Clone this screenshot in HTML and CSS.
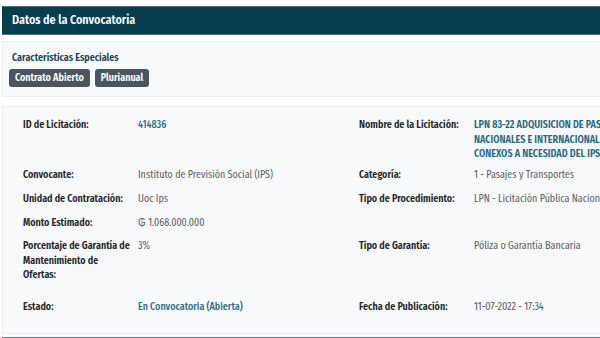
FILE: index.html
```html
<!DOCTYPE html>
<html lang="es">
<head>
<meta charset="utf-8">
<title>Datos de la Convocatoria</title>
<link rel="stylesheet" href="styles.css">
</head>
<body>
<div class="page">
  <div class="panel-header">Datos de la Convocatoria</div>

  <div class="card special">
    <div class="special-title">Características Especiales</div>
    <div class="badges">
      <span class="badge">Contrato Abierto</span>
      <span class="badge">Plurianual</span>
    </div>
  </div>

  <div class="card details">
    <div class="row row-first">
      <div class="label">ID de Licitación:</div>
      <div class="value link">414836</div>
      <div class="label">Nombre de la Licitación:</div>
      <div class="value title">LPN 83-22 ADQUISICION DE PASAJES AEREOS<br>NACIONALES E INTERNACIONALES Y SERVICIOS<br>CONEXOS A NECESIDAD DEL IPS</div>
    </div>
    <div class="row row-second">
      <div class="label">Convocante:</div>
      <div class="value">Instituto de Previsión Social (IPS)</div>
      <div class="label">Categoría:</div>
      <div class="value">1 - Pasajes y Transportes</div>
    </div>
    <div class="row">
      <div class="label">Unidad de Contratación:</div>
      <div class="value">Uoc Ips</div>
      <div class="label">Tipo de Procedimiento:</div>
      <div class="value">LPN - Licitación Pública Nacional</div>
    </div>
    <div class="row">
      <div class="label">Monto Estimado:</div>
      <div class="value">₲ 1.068.000.000</div>
      <div class="label"></div>
      <div class="value"></div>
    </div>
    <div class="row row-wide">
      <div class="label">Porcentaje de Garantía de<br>Mantenimiento de<br>Ofertas:</div>
      <div class="value">3%</div>
      <div class="label">Tipo de Garantía:</div>
      <div class="value">Póliza o Garantía Bancaria</div>
    </div>
    <div class="row">
      <div class="label">Estado:</div>
      <div class="value link">En Convocatoria (Abierta)</div>
      <div class="label">Fecha de Publicación:</div>
      <div class="value">11-07-2022 - 17:34</div>
    </div>
  </div>

  <div class="next-header"></div>
</div>
</body>
</html>
```
FILE: styles.css
```css
html, body {
  margin: 0;
  padding: 0;
  overflow: hidden;
  background: #ffffff;
}

body {
  font-family: "Fira Sans Condensed", "Fira Sans", "Liberation Sans", sans-serif;
  font-size: 10px;
  color: #555b60;
}

.page {
  width: 780px;
  padding: 6px 0 0 2px;
}

.panel-header {
  height: 27px;
  background: #063d4f;
  border-top: 1px solid #4e6f7b;
  border-bottom: 1px solid #4e6f7b;
  color: #ffffff;
  font-family: "Fira Sans Condensed", "Fira Sans", sans-serif;
  font-weight: 600;
  font-size: 12px;
  line-height: 27px;
  padding-left: 10px;
}

.card {
  background: #f8f9fa;
  border: 1px solid #ebedef;
}

.special {
  margin-top: 6px;
  padding: 9px 0 9px 6px;
}

.special-title {
  color: #1f3f52;
  font-weight: 600;
  font-size: 10px;
  line-height: 14px;
  padding-left: 3px;
}

.badges {
  display: flex;
  gap: 5px;
  margin-top: 4px;
}

.badge {
  display: inline-block;
  height: 18px;
  line-height: 18px;
  padding: 0 6px;
  border-radius: 3px;
  background: #4a5560;
  color: #ffffff;
  font-weight: 600;
  font-size: 10px;
}

.details {
  margin-top: 9px;
  padding: 11px 0 19px 20px;
}

.row {
  display: grid;
  grid-template-columns: 115px 221px 115px 1fr;
  line-height: 14.5px;
  margin-bottom: 9px;
}

.row:last-child {
  margin-bottom: 0;
}

.row-first {
  margin-bottom: 6px;
}

.row-second {
  margin-bottom: 10px;
}

.row-wide {
  margin-bottom: 17px;
}

.label {
  color: #212529;
  font-weight: 600;
}

.value {
  color: #5a6066;
  white-space: nowrap;
}

.link {
  color: #2a6e88;
  font-weight: 500;
}

.title {
  color: #1e6a83;
  font-weight: 600;
}

.next-header {
  margin-top: 3px;
  height: 10px;
  background: #587a84;
}
```
